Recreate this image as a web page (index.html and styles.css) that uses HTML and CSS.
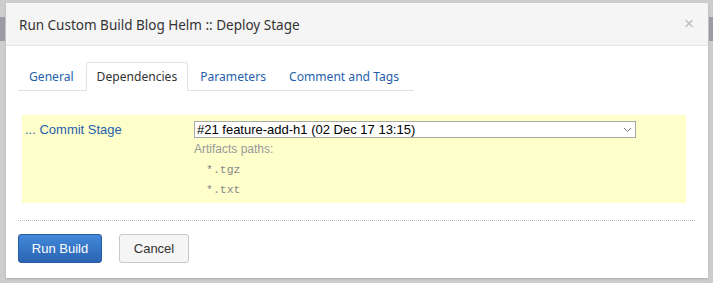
FILE: index.html
```html
<!DOCTYPE html>
<html lang="en">
<head>
    <meta charset="UTF-8">
    <title>Run Custom Build</title>
    <link rel="stylesheet" href="styles.css">
</head>
<body>
    <div class="backdrop">
        <div class="scroll-left"></div>
        <div class="dialog">
            <div class="dialog-header">
                <span class="dialog-title">Run Custom Build Blog Helm :: Deploy Stage</span>
                <span class="close">&times;</span>
            </div>
            <div class="dialog-body">
                <div class="tabs">
                    <div class="tab">General</div>
                    <div class="tab active">Dependencies</div>
                    <div class="tab">Parameters</div>
                    <div class="tab">Comment and Tags</div>
                </div>
                <div class="dep-box">
                    <div class="dep-name">... Commit Stage</div>
                    <div class="dep-value">
                        <div class="select">
                            <span>#21 feature-add-h1 (02 Dec 17 13:15)</span>
                            <svg width="9" height="6" viewBox="0 0 9 6"><path d="M1 1 L4.5 4.5 L8 1" fill="none" stroke="#777" stroke-width="1"/></svg>
                        </div>
                        <div class="artifacts-label">Artifacts paths:</div>
                        <div class="artifact">*.tgz</div>
                        <div class="artifact">*.txt</div>
                    </div>
                </div>
                <div class="separator"></div>
                <div class="actions">
                    <button class="btn btn-primary">Run Build</button>
                    <button class="btn btn-default">Cancel</button>
                </div>
            </div>
        </div>
        <div class="scroll-right"></div>
    </div>
</body>
</html>
```

FILE: styles.css
```css
body {
    margin: 0;
    background: #cdcdcd;
    font-family: "Liberation Sans", Arial, sans-serif;
}
.backdrop {
    display: flex;
    align-items: flex-start;
    height: 283px;
    overflow: hidden;
}
.scroll-left {
    width: 5px;
    height: 24px;
    margin-top: 17px;
    margin-right: 1px;
    background: #9a9ba6;
}
.scroll-right {
    width: 4px;
    height: 24px;
    margin-top: 17px;
    margin-left: 1px;
    background: #9a9ba6;
}
.dialog {
    width: 702px;
    height: 275px;
    margin-top: 3px;
    background: #fff;
    box-shadow: 0 1px 2px rgba(0, 0, 0, 0.15);
}
.dialog-header {
    display: flex;
    justify-content: space-between;
    align-items: center;
    height: 42px;
    padding: 0 14px 0 13px;
    background: #f5f5f5;
    border-bottom: 1px solid #e6e6e6;
}
.dialog-title {
    font-family: "Noto Sans", "Open Sans", sans-serif;
    font-size: 13.5px;
    color: #333;
    padding-top: 2px;
}
.close {
    font-family: "Liberation Sans", Arial, sans-serif;
    font-size: 17px;
    color: #bbb;
}
.dialog-body {
    padding: 16px 12px 0 12px;
}
.tabs {
    display: flex;
    width: 396px;
    border-bottom: 1px solid #e1e1e1;
    font-family: "Noto Sans", "Open Sans", sans-serif;
    font-size: 12.1px;
}
.tab {
    flex-shrink: 0;
    white-space: nowrap;
    line-height: 27px;
    padding: 0 10px;
    margin-right: 1px;
    color: #1f5fad;
    border: 1px solid transparent;
    border-bottom: none;
    border-radius: 3px 3px 0 0;
    margin-bottom: -1px;
}
.tab.active {
    color: #333;
    background: #fff;
    border-color: #dde3ea;
    border-bottom: 1px solid #fff;
}
.dep-box {
    display: flex;
    margin: 24px 10px 0 4px;
    padding: 6px 3px 6px 3px;
    background: #ffffcc;
    height: 76px;
    font-size: 12px;
}
.dep-name {
    width: 169px;
    color: #1f5fad;
    font-size: 13px;
    padding-top: 1px;
}
.dep-value {
    display: flex;
    flex-direction: column;
}
.select {
    display: flex;
    justify-content: space-between;
    align-items: center;
    width: 435px;
    height: 15px;
    padding: 0 3px 0 2px;
    border: 1px solid #a9a9a9;
    background: #fff;
    color: #000;
    font-size: 13px;
}
.artifacts-label {
    color: #999;
    margin-top: 4px;
    font-size: 12px;
}
.artifact {
    font-family: "Liberation Mono", "Courier New", monospace;
    font-size: 11.5px;
    color: #888;
    margin: 7px 0 0 12px;
}
.separator {
    margin-top: 17px;
    border-top: 1px dotted #bbb;
    width: 677px;
}
.actions {
    display: flex;
    gap: 17px;
    margin-top: 13px;
}
.btn {
    height: 29px;
    padding: 0;
    white-space: nowrap;
    font-family: "Liberation Sans", Arial, sans-serif;
    font-size: 13px;
    border-radius: 3px;
    cursor: pointer;
}
.btn-primary {
    width: 84px;
    color: #fff;
    border: 1px solid #2a5ba6;
    background: linear-gradient(to bottom, #4189d8, #2c63b3);
}
.btn-default {
    width: 70px;
    color: #333;
    border: 1px solid #c8c8c8;
    background: #f5f5f5;
}
```
